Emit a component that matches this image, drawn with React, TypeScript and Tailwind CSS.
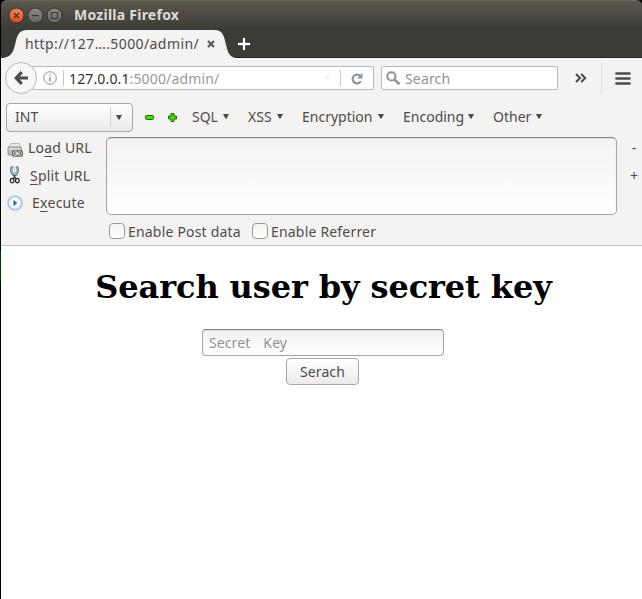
import type { ReactNode } from "react";

function Caret({ className = "" }: { className?: string }) {
  return (
    <svg className={"shrink-0 " + className} width="6" height="5" viewBox="0 0 6 5">
      <path d="M0 0h6L3.6 4.6H2.4z" fill="#4c4c4c" />
    </svg>
  );
}

function WindowButton({ close, children }: { close?: boolean; children: ReactNode }) {
  return (
    <svg width="17" height="17" viewBox="0 0 17 17" className="shrink-0">
      <defs>
        <linearGradient id="closeFill" x1="0" y1="0" x2="0" y2="1">
          <stop offset="0" stopColor="#f58462" />
          <stop offset="1" stopColor="#df4a16" />
        </linearGradient>
        <linearGradient id="grayFill" x1="0" y1="0" x2="0" y2="1">
          <stop offset="0" stopColor="#8b8980" />
          <stop offset="1" stopColor="#66645d" />
        </linearGradient>
      </defs>
      <circle cx="8.5" cy="8.5" r="7.5" fill={close ? "url(#closeFill)" : "url(#grayFill)"} stroke="#34322e" />
      <g fill="none" stroke="#3a3832" strokeWidth="1.1">{children}</g>
    </svg>
  );
}

function Menu({ label, className }: { label: string; className: string }) {
  return (
    <div className={"flex shrink-0 items-center justify-between pb-[2px] " + className}>
      <span>{label}</span>
      <Caret />
    </div>
  );
}

function Check({ label, className }: { label: string; className: string }) {
  return (
    <label className="flex items-center gap-[3px]">
      <span className="h-4 w-4 rounded-[4px] border border-[#9c9a97] bg-gradient-to-b from-[#f4f4f4] to-white" />
      <span className={"pt-[2px] tracking-[0.19px] " + className}>{label}</span>
    </label>
  );
}

function Underlined({ children }: { children: string }) {
  return <span className="underline decoration-1 underline-offset-[3px]">{children}</span>;
}

export default function App() {
  return (
    <div className="flex h-[599px] w-[642px] overflow-hidden bg-black whitespace-nowrap font-['Noto_Sans',sans-serif] text-[14px] leading-[20px] text-[#4c4c4c]">
      <div className="flex w-px shrink-0 flex-col pt-[251px]">
        <div className="h-[30px] bg-[#003c00]" />
      </div>
      <div className="flex w-[641px] flex-col bg-white">
        <div className="h-[58px] shrink-0 bg-black">
          <div className="h-full rounded-t-[6px] border-b border-[#292621] bg-[linear-gradient(#5c584f_0px,#3c3b37_29px)] shadow-[inset_0_1px_0_#69655b]">
            <header className="flex h-[30px] items-center pl-[7px]">
              <div className="flex gap-[2px]">
                <WindowButton close><path d="M6 6l5 5M11 6l-5 5" /></WindowButton>
                <WindowButton><path d="M5 8.5h7" /></WindowButton>
                <WindowButton><path d="M5.5 5.5h6v6h-6z" /></WindowButton>
              </div>
              <span className="ml-[11px] text-[14px] font-bold tracking-[0.25px] text-[#dfdbd2]">Mozilla Firefox</span>
            </header>
            <div className="flex h-[28px]">
              <div className="relative h-[28px] w-[236px]">
                <svg className="absolute inset-0" width="236" height="28" viewBox="0 0 236 28">
                  <path d="M0 28C9 28 12 23 14 15C16 6 17 0 27 0H213C222 0 223 6 225 15C227 23 229 28 236 28z" fill="#f4f3f2" />
                </svg>
                <div className="relative flex h-[28px] items-center pl-[24px]">
                  <span className="w-[176px] tracking-[0.41px]">http://127….5000/admin/</span>
                  <svg className="ml-[6px]" width="8" height="8" viewBox="0 0 8 8"><path d="M1 1l6 6M7 1L1 7" stroke="#5b5b59" strokeWidth="2.3" /></svg>
                </div>
              </div>
              <svg className="mt-[7px]" width="14" height="14" viewBox="0 0 14 14">
                <path d="M7 0v14M0 7h14" stroke="#24231f" strokeWidth="4" />
                <path d="M7 .7v12.6M.7 7h12.6" stroke="#fff" strokeWidth="2.4" />
              </svg>
            </div>
          </div>
        </div>

        <nav className="flex h-[40px] shrink-0 items-center bg-[#f4f3f2] pl-[4px]">
          <div className="z-10 flex h-8 w-8 shrink-0 items-center justify-center rounded-full border border-[#b9b8b6] bg-[#f8f7f7]">
            <svg width="14" height="14" viewBox="0 0 14 14"><path d="M7.8 1.2L2.2 7l5.6 5.8M2.5 7H14" fill="none" stroke="#4b4b4b" strokeWidth="3.2" /></svg>
          </div>
          <div className="-ml-[5px] flex h-[24px] w-[342px] shrink-0 items-center rounded-r-[2px] border border-[#bbb9b6] bg-white">
            <svg className="ml-[10px] shrink-0" width="14" height="14" viewBox="0 0 14 14">
              <circle cx="7" cy="7" r="6.3" fill="none" stroke="#929292" />
              <path d="M7 6v4.4M7 3.4v1.3" stroke="#929292" strokeWidth="1.4" />
            </svg>
            <span className="ml-[6px] mr-[5px] h-4 w-px bg-[#c9c9c9]" />
            <span className="w-[255px] shrink-0 pt-[1px] tracking-[0.14px] text-[#999]"><span className="text-[#303030]">127.0.0.1</span>:5000/admin/</span>
            <svg className="shrink-0" width="6" height="4"><path d="M0 0h6L3 4z" fill="#f0f0f0" /></svg>
            <span className="ml-[10px] h-4 w-px shrink-0 bg-[#c9c9c9]" />
            <svg className="ml-[10px] mt-[1px] shrink-0" width="12" height="12" viewBox="0 0 12 12">
              <path d="M9.2 2.9A4.4 4.4 0 1 0 9.8 8.2" fill="none" stroke="#8997a5" strokeWidth="2.2" />
              <path d="M11.5 0v5.6H6z" fill="#8997a5" />
            </svg>
          </div>
          <div className="ml-[7px] flex h-[24px] w-[177px] shrink-0 items-center rounded-[2px] border border-[#bbb9b6] bg-white pl-[4px] text-[#939393]">
            <svg width="15" height="15" viewBox="0 0 15 15"><circle cx="5.4" cy="5.4" r="4.1" fill="none" stroke="#929292" strokeWidth="2" /><path d="M8.4 8.4l5 4.8" stroke="#929292" strokeWidth="2.6" /></svg>
            <span className="ml-[4px] pt-[1px] tracking-[0.15px]">Search</span>
          </div>
          <svg className="ml-[17px] shrink-0" width="12" height="10" viewBox="0 0 12 10"><path d="M1 1l4 4-4 4M6.2 1l4 4-4 4" fill="none" stroke="#4b4b4b" strokeWidth="2" /></svg>
          <span className="ml-[14px] h-8 w-px bg-[#deddda]" />
          <svg className="ml-[13px] shrink-0" width="16" height="13" viewBox="0 0 16 13"><path d="M1.5 1.5h13M1.5 6.5h13M1.5 11.5h13" stroke="#4b4b4b" strokeWidth="2.7" strokeLinecap="round" /></svg>
        </nav>

        <section className="flex h-[148px] shrink-0 flex-col border-b border-[#c5c1bc] bg-[#f4f3f2]">
          <div className="flex h-[39px] items-center pl-[5px]">
            <div className="-mt-[1px] flex h-[29px] w-[127px] shrink-0 items-center rounded-[4px] border border-[#aaa8a5] bg-gradient-to-b from-white to-[#ebeae8] pl-[8px]">
              <span className="w-[95px] pb-[1px]">INT</span>
              <span className="h-5 w-px bg-[#d6d4d2]" />
              <Caret className="ml-[5px]" />
            </div>
            <svg className="ml-[12px]" width="9" height="5" viewBox="0 0 9 5"><rect x=".5" y=".5" width="8" height="4" rx="1" fill="#48d807" stroke="#246b09" /></svg>
            <svg className="ml-[14px] mr-[15px] shrink-0" width="9" height="9" viewBox="0 0 9 9"><path d="M3 .5h3V3h2.5v3H6v2.5H3V6H.5V3H3z" fill="#48d807" stroke="#246b09" strokeLinejoin="round" /></svg>
            <Menu label="SQL" className="w-[37px]" />
            <Menu label="XSS" className="ml-[19px] w-[35px]" />
            <Menu label="Encryption" className="ml-[19px] w-[82px]" />
            <Menu label="Encoding" className="ml-[19px] w-[71px]" />
            <Menu label="Other" className="ml-[19px] w-[49px]" />
          </div>
          <div className="flex h-[78px]">
            <div className="w-[105px] shrink-0">
              <div className="flex h-[22px] items-center pl-[6px]">
                <svg className="mt-[3px]" width="16" height="16" viewBox="0 0 16 16">
                  <path d="M3.5 1.5h8.5l2 4.5H1.5z" fill="#e9e9e9" stroke="#b9b9b9" />
                  <path d="M1 6q0-1 1-1h11q1.5 0 1.5 2v5q0 1-1 1H2q-1 0-1-1z" fill="#b9b9b9" stroke="#949494" />
                  <path d="M2 7h11" stroke="#f1f1f1" />
                  <rect x="5" y="8.2" width="11" height="6.6" rx="2" fill="#606060" />
                  <rect x="6.5" y="9.8" width="4" height="3.4" rx="1.4" fill="none" stroke="#eee" />
                  <rect x="10.5" y="9.8" width="4" height="3.4" rx="1.4" fill="none" stroke="#ddd" />
                  <path d="M8.5 11.5h4" stroke="#eee" />
                </svg>
                <span className="ml-[5px] tracking-[0.2px]">Lo<Underlined>a</Underlined>d URL</span>
              </div>
              <div className="flex h-[34px] items-center pl-[8px]">
                <svg className="-mt-[3px]" width="12" height="19" viewBox="0 0 12 19">
                  <path d="M3.4 1.5Q.5 6 5 10.8M7.6 1.5Q10.5 6 6 10.8" fill="none" stroke="#537789" strokeWidth="2.4" />
                  <path d="M3.2 2.4Q1.5 6 4.8 9.8M7.8 2.4Q9.5 6 6.2 9.8" fill="none" stroke="#cfe2ec" strokeWidth=".9" />
                  <path d="M5.5 2v8" stroke="#a5bcc8" strokeWidth=".8" />
                  <path d="M5.5 10v2.2L4 14M5.5 12L7.2 14" fill="none" stroke="#333" strokeWidth="1.4" />
                  <ellipse cx="3.1" cy="15.6" rx="1.8" ry="2.2" fill="none" stroke="#292929" strokeWidth="1.3" />
                  <ellipse cx="8.3" cy="15.6" rx="1.8" ry="2.2" fill="none" stroke="#292929" strokeWidth="1.3" />
                </svg>
                <span className="ml-[9px] tracking-[0.2px]"><Underlined>S</Underlined>plit URL</span>
              </div>
              <div className="-mt-[1px] flex h-[21px] items-center pl-[6px]">
                <svg width="16" height="16" viewBox="0 0 16 16"><circle cx="8" cy="8" r="7" fill="#edf4ff" stroke="#a9c5eb" strokeWidth="1.7" /><circle cx="8" cy="8" r="5.2" fill="#fff" stroke="#dae7f8" /><path d="M6.5 4.7v6.6L10.3 8z" fill="#2868b7" /></svg>
                <span className="ml-[9px] tracking-[0.27px]">E<Underlined>x</Underlined>ecute</span>
              </div>
            </div>
            <div className="h-[78px] w-[511px] rounded-[5px] border border-t-[#858583] border-[#a7a5a2] bg-gradient-to-b from-[#f3f3f3] to-white shadow-[inset_0_1px_1px_#dedede]" />
            <div className="flex flex-1 flex-col items-center pl-[9px] pt-[1px]">
              <span>-</span>
              <span className="mt-[8px] text-[#3b4b83]">+</span>
            </div>
          </div>
          <div className="flex h-[29px] items-center gap-[11px] pl-[108px] pt-[3px]">
            <Check label="Enable Post data" className="w-[113px]" />
            <Check label="Enable Referrer" className="w-[106px]" />
          </div>
        </section>

        <main className="flex flex-col items-center">
          <h1 className="mt-[23px] ml-[4px] font-['DejaVu_Serif',serif] text-[32px] font-bold leading-[37px] tracking-[-0.1px] text-black">Search user by secret key</h1>
          <div className="mt-[23px] flex h-[27px] w-[242px] items-center rounded-[4px] border border-t-[#858583] border-[#a7a5a2] bg-gradient-to-b from-[#f1f1f1] to-white pl-[6px] text-[#929292] ml-[3px] shadow-[inset_0_1px_1px_#dedede]">
            <span className="whitespace-pre [word-spacing:0.6px] tracking-[0.1px]">Secret   Key</span>
          </div>
          <button className="mt-[2px] ml-[2px] h-[27px] w-[73px] rounded-[4px] border border-[#aaa8a5] bg-gradient-to-b from-white to-[#ebeae8] tracking-[0.1px]">Serach</button>
        </main>
      </div>
    </div>
  );
}
